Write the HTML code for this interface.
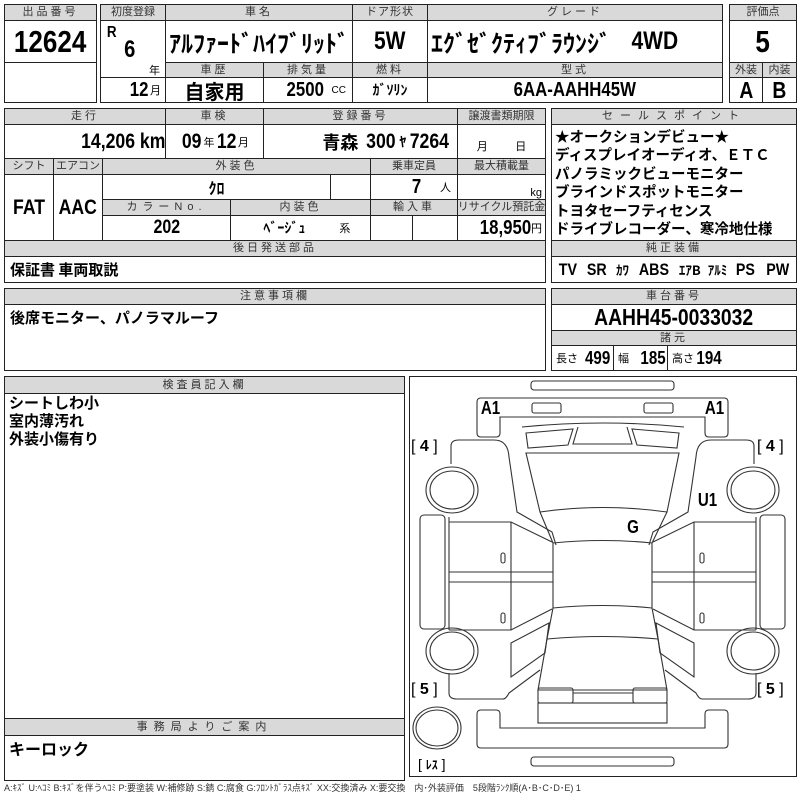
<!DOCTYPE html>
<html><head><meta charset="utf-8"><style>
*{margin:0;padding:0;box-sizing:border-box}
body{width:800px;height:800px;background:#fff;position:relative;overflow:hidden;font-family:"Liberation Sans","Noto Sans CJK JP",sans-serif;color:#000}
.c{position:absolute;border:1px solid #222;display:flex;align-items:center;justify-content:center;white-space:nowrap;overflow:hidden}
.h{background:#d9d9d9;font-size:11px;color:#333;letter-spacing:3px;line-height:1}
.b{font-weight:bold;font-family:"Liberation Sans","Noto Sans CJK JP",sans-serif;display:inline-block;transform:scaleX(.84)}
.j{font-weight:bold;font-family:"Noto Sans CJK JP",sans-serif}
.t{position:absolute;white-space:nowrap}
</style></head><body>

<!-- box 1 -->
<div class="c h" style="left:4px;top:4px;width:93px;height:17px">出品番号</div>
<div class="c" style="left:4px;top:20px;width:93px;height:43px"><span class="b" style="font-size:31px">12624</span></div>
<div class="c" style="left:4px;top:62px;width:93px;height:41px"></div>

<!-- box 2 -->
<div class="c h" style="left:100px;top:4px;width:66px;height:17px;letter-spacing:0">初度登録</div>
<div class="c h" style="left:165px;top:4px;width:188px;height:17px">車名</div>
<div class="c h" style="left:352px;top:4px;width:76px;height:17px;letter-spacing:1px">ドア形状</div>
<div class="c h" style="left:427px;top:4px;width:296px;height:17px">グレード</div>
<div class="c" style="left:100px;top:20px;width:66px;height:58px"></div>
<div class="t b" style="left:106px;top:24px;font-size:16px">R</div>
<div class="t b" style="left:123px;top:36px;font-size:24px">6</div>
<div class="t" style="left:149px;top:62px;font-size:11px">年</div>
<div class="c j" style="left:165px;top:20px;width:188px;height:43px;font-size:24px;justify-content:flex-start;padding-left:3px">ｱﾙﾌｧｰﾄﾞﾊｲﾌﾞﾘｯﾄﾞ</div>
<div class="c" style="left:352px;top:20px;width:76px;height:43px"><span class="b" style="font-size:25px">5W</span></div>
<div class="c j" style="left:427px;top:20px;width:296px;height:43px;font-size:24px;justify-content:flex-start;padding-left:3px">ｴｸﾞｾﾞｸﾃｨﾌﾞﾗｳﾝｼﾞ&nbsp;&nbsp;&nbsp;<span class="b" style="font-size:25px">4WD</span></div>
<div class="c h" style="left:165px;top:62px;width:99px;height:16px">車歴</div>
<div class="c h" style="left:263px;top:62px;width:90px;height:16px">排気量</div>
<div class="c h" style="left:352px;top:62px;width:76px;height:16px">燃料</div>
<div class="c h" style="left:427px;top:62px;width:296px;height:16px">型式</div>
<div class="c" style="left:100px;top:77px;width:66px;height:26px;justify-content:flex-end;padding-right:4px"><span class="b" style="font-size:20px">12</span><span style="font-size:11px">月</span></div>
<div class="c j" style="left:165px;top:77px;width:99px;height:26px;font-size:20px">自家用</div>
<div class="c" style="left:263px;top:77px;width:90px;height:26px;justify-content:flex-end;padding-right:6px"><span class="b" style="font-size:20px">2500</span>&nbsp;<span style="font-size:10px">CC</span></div>
<div class="c j" style="left:352px;top:77px;width:76px;height:26px;font-size:14px">ｶﾞｿﾘﾝ</div>
<div class="c" style="left:427px;top:77px;width:296px;height:26px"><span class="b" style="font-size:20px">6AA-AAHH45W</span></div>

<!-- box 3 -->
<div class="c h" style="left:729px;top:4px;width:68px;height:17px;letter-spacing:0">評価点</div>
<div class="c" style="left:729px;top:20px;width:68px;height:43px"><span class="b" style="font-size:31px">5</span></div>
<div class="c h" style="left:729px;top:62px;width:34px;height:16px;letter-spacing:0">外装</div>
<div class="c h" style="left:762px;top:62px;width:35px;height:16px;letter-spacing:0">内装</div>
<div class="c" style="left:729px;top:77px;width:34px;height:26px"><span class="b" style="font-size:23px">A</span></div>
<div class="c" style="left:762px;top:77px;width:35px;height:26px"><span class="b" style="font-size:23px">B</span></div>

<!-- section 2 -->
<div class="c h" style="left:4px;top:108px;width:162px;height:17px">走行</div>
<div class="c h" style="left:165px;top:108px;width:99px;height:17px">車検</div>
<div class="c h" style="left:263px;top:108px;width:195px;height:17px">登録番号</div>
<div class="c h" style="left:457px;top:108px;width:89px;height:17px;letter-spacing:0">譲渡書類期限</div>
<div class="c" style="left:4px;top:124px;width:162px;height:35px;justify-content:flex-end;padding-right:0"><span class="b" style="font-size:21px;transform-origin:right">14,206 km</span></div>
<div class="c" style="left:165px;top:124px;width:99px;height:35px"><span class="b" style="font-size:21px">09</span><span style="font-size:11px">年</span><span class="b" style="font-size:21px">12</span><span style="font-size:11px">月</span></div>
<div class="c" style="left:263px;top:124px;width:195px;height:35px;justify-content:flex-end;padding-right:4px"><span class="j" style="font-size:18px">青森</span><span class="b" style="font-size:21px">&nbsp;300</span><span class="j" style="font-size:14px">ﾔ</span><span class="b" style="font-size:21px">7264</span></div>
<div class="c" style="left:457px;top:124px;width:89px;height:35px;font-size:11px;align-items:flex-end;padding-bottom:4px">月&nbsp;&nbsp;&nbsp;&nbsp;&nbsp;&nbsp;&nbsp;&nbsp;&nbsp;日</div>
<div class="c h" style="left:4px;top:158px;width:50px;height:17px;letter-spacing:0">シフト</div>
<div class="c h" style="left:53px;top:158px;width:50px;height:17px;letter-spacing:0">エアコン</div>
<div class="c h" style="left:102px;top:158px;width:269px;height:17px">外装色</div>
<div class="c h" style="left:370px;top:158px;width:88px;height:17px;letter-spacing:0">乗車定員</div>
<div class="c h" style="left:457px;top:158px;width:89px;height:17px;letter-spacing:0">最大積載量</div>
<div class="c" style="left:4px;top:174px;width:50px;height:67px"><span class="b" style="font-size:21px">FAT</span></div>
<div class="c" style="left:53px;top:174px;width:50px;height:67px"><span class="b" style="font-size:21px">AAC</span></div>
<div class="c j" style="left:102px;top:174px;width:229px;height:26px;font-size:16px">ｸﾛ</div>
<div class="c" style="left:330px;top:174px;width:41px;height:26px"></div>
<div class="c" style="left:370px;top:174px;width:88px;height:26px;justify-content:flex-end;padding-right:6px"><span class="b" style="font-size:20px">7</span>&nbsp;&nbsp;&nbsp;&nbsp;<span style="font-size:11px">人</span></div>
<div class="c" style="left:457px;top:174px;width:89px;height:26px;font-size:11px;justify-content:flex-end;padding-right:3px;align-items:flex-end">kg</div>
<div class="c h" style="left:102px;top:199px;width:129px;height:17px;letter-spacing:5px">カラーNo.</div>
<div class="c h" style="left:230px;top:199px;width:141px;height:17px">内装色</div>
<div class="c h" style="left:370px;top:199px;width:88px;height:17px">輸入車</div>
<div class="c h" style="left:457px;top:199px;width:89px;height:17px;letter-spacing:0">リサイクル預託金</div>
<div class="c" style="left:102px;top:215px;width:129px;height:26px"><span class="b" style="font-size:19px">202</span></div>
<div class="c" style="left:230px;top:215px;width:141px;height:26px"><span class="j" style="font-size:14px">&nbsp;&nbsp;&nbsp;&nbsp;ﾍﾞｰｼﾞｭ</span><span style="font-size:11px;margin-left:34px">系</span></div>
<div class="c" style="left:370px;top:215px;width:43px;height:26px"></div>
<div class="c" style="left:412px;top:215px;width:46px;height:26px"></div>
<div class="c" style="left:457px;top:215px;width:89px;height:26px;justify-content:flex-end;padding-right:3px"><span class="b" style="font-size:20px;transform-origin:right">18,950</span><span style="font-size:11px">円</span></div>
<div class="c h" style="left:4px;top:240px;width:542px;height:17px">後日発送部品</div>
<div class="c j" style="left:4px;top:256px;width:542px;height:27px;font-size:15px;justify-content:flex-start;padding-left:5px">保証書 車両取説</div>

<!-- sales points -->
<div class="c h" style="left:551px;top:108px;width:246px;height:17px;letter-spacing:7px">セールスポイント</div>
<div class="c" style="left:551px;top:124px;width:246px;height:117px;display:block;padding:3px 0 0 3px;font-size:14.5px;line-height:18.4px;font-weight:bold;font-family:'Noto Sans CJK JP',sans-serif;white-space:pre">★オークションデビュー★
ディスプレイオーディオ、ＥＴＣ
パノラミックビューモニター
ブラインドスポットモニター
トヨタセーフティセンス
ドライブレコーダー、寒冷地仕様</div>
<div class="c h" style="left:551px;top:240px;width:246px;height:17px">純正装備</div>
<div class="c" style="left:551px;top:256px;width:246px;height:27px;justify-content:space-around;padding:0 1px"><span class="b" style="font-size:17px">TV</span><span class="b" style="font-size:17px">SR</span><span class="j" style="font-size:13px">ｶﾜ</span><span class="b" style="font-size:17px">ABS</span><span class="j" style="font-size:13px">ｴｱB</span><span class="j" style="font-size:13px">ｱﾙﾐ</span><span class="b" style="font-size:17px">PS</span><span class="b" style="font-size:17px">PW</span></div>

<!-- section 3 -->
<div class="c h" style="left:4px;top:288px;width:542px;height:17px">注意事項欄</div>
<div class="c" style="left:4px;top:304px;width:542px;height:67px;display:block;padding:2px 5px"><span class="j" style="font-size:15px">後席モニター、パノラマルーフ</span></div>
<div class="c h" style="left:551px;top:288px;width:246px;height:17px">車台番号</div>
<div class="c" style="left:551px;top:304px;width:246px;height:27px"><span class="b" style="font-size:23px">AAHH45-0033032</span></div>
<div class="c h" style="left:551px;top:330px;width:246px;height:16px">諸元</div>
<div class="c" style="left:551px;top:345px;width:63px;height:26px;justify-content:flex-start;padding-left:4px"><span style="font-size:11px">長さ</span><span class="b" style="font-size:18px">&nbsp;499</span></div>
<div class="c" style="left:613px;top:345px;width:55px;height:26px;justify-content:flex-start;padding-left:4px"><span style="font-size:11px">幅</span>&nbsp;&nbsp;<span class="b" style="font-size:18px">185</span></div>
<div class="c" style="left:667px;top:345px;width:130px;height:26px;justify-content:flex-start;padding-left:4px"><span style="font-size:11px">高さ</span><span class="b" style="font-size:18px">194</span></div>

<!-- section 4 -->
<div class="c" style="left:4px;top:376px;width:401px;height:405px"></div>
<div class="c h" style="left:4px;top:376px;width:401px;height:18px">検査員記入欄</div>
<div class="t j" style="left:9px;top:394px;font-size:15px;line-height:18px">シートしわ小<br>室内薄汚れ<br>外装小傷有り</div>
<div class="c h" style="left:4px;top:718px;width:401px;height:18px;letter-spacing:6px">事務局よりご案内</div>
<div class="t j" style="left:9px;top:736px;font-size:16px">キーロック</div>

<div class="c" style="left:409px;top:376px;width:388px;height:401px"></div>
<svg style="position:absolute;left:0;top:0" width="800" height="800" viewBox="0 0 800 800" fill="none" stroke="#333" stroke-width="1.1">
<rect x="531" y="381" width="143" height="9" rx="3"/>
<path d="M477,402 q0,-4 4,-4 L724,398 q4,0 4,4 L728,433 q0,4 -4,4 L709,437 q-4,0 -4,-4 L705,417 L500,417 L500,433 q0,4 -4,4 L481,437 q-4,0 -4,-4 Z"/>
<rect x="532" y="403" width="29" height="10" rx="2"/>
<rect x="644" y="403" width="29" height="10" rx="2"/>
<path d="M522,427 Q603,419 684,427"/>
<path d="M526,433 L573,429 L568,445 L528,448 Z"/>
<path d="M679,433 L632,429 L637,445 L677,448 Z"/>
<path d="M578,427 L573,444 L632,444 L627,427"/>
<path d="M526,453 L679,453 L667,512 Q603,503 540,512 Z"/>
<path d="M540,512 L553,543 Q603,538 652,543 L667,512"/>
<path d="M553,543 L553,608 Q603,603 652,608 L652,543"/>
<path d="M553,608 L547,639 Q603,634 658,639 L652,608"/>
<path d="M547,639 L538,690 L667,690 L658,639"/>
<rect x="538" y="688" width="35" height="15" rx="2"/>
<rect x="633" y="688" width="34" height="15" rx="2"/>
<path d="M573,693 L633,693"/>
<rect x="538" y="703" width="129" height="20"/>
<path d="M477,744 q0,4 4,4 L724,748 q4,0 4,-4 L728,714 q0,-4 -4,-4 L709,710 q-4,0 -4,4 L705,728 L500,728 L500,714 q0,-4 -4,-4 L481,710 q-4,0 -4,4 Z"/>
<rect x="531" y="757" width="143" height="9" rx="3"/>
<g id="L">
<path d="M451,464 L451,446 q0,-6 8,-6 L494,440 q14,0 15,17 L517,512 L552,532 L556,545"/>
<path d="M449,517 L449,630"/>
<path d="M449,522 L511,522 L552,542"/>
<path d="M449,572 L553,572 M449,582 L553,582"/>
<path d="M511,522 L511,630 M449,630 L511,630 L552,609"/>
<rect x="420" y="515" width="25" height="114" rx="4"/>
<ellipse cx="452" cy="490" rx="26" ry="23"/><ellipse cx="452" cy="490" rx="22" ry="19"/>
<ellipse cx="452" cy="651" rx="26" ry="23"/><ellipse cx="452" cy="651" rx="22" ry="19"/>
<path d="M511,643 L549,623 L545,653 L511,677 Z"/>
<path d="M449,673 L449,693 q0,6 8,6 L503,699 q3,0 6,-6 L540,670"/>
<rect x="501" y="553" width="4" height="10" rx="2"/>
<rect x="501" y="613" width="4" height="10" rx="2"/>
</g>
<use href="#L" transform="matrix(-1,0,0,1,1205,0)"/>
<ellipse cx="437" cy="728" rx="24" ry="21"/><ellipse cx="437" cy="728" rx="21" ry="18"/>
</svg>
<div class="t b" style="left:479px;top:398px;font-size:18px">A1</div>
<div class="t b" style="left:703px;top:398px;font-size:18px">A1</div>
<div class="t" style="left:411px;top:438px;font-size:16px">[ <b>4</b> ]</div>
<div class="t" style="left:757px;top:438px;font-size:16px">[ <b>4</b> ]</div>
<div class="t b" style="left:696px;top:490px;font-size:18px">U1</div>
<div class="t b" style="left:626px;top:517px;font-size:18px">G</div>
<div class="t" style="left:411px;top:681px;font-size:16px">[ <b>5</b> ]</div>
<div class="t" style="left:757px;top:681px;font-size:16px">[ <b>5</b> ]</div>
<div class="t" style="left:418px;top:756px;font-size:14px">[ <b class="j" style="font-size:12px">ﾚｽ</b> ]</div>

<div class="t" style="left:4px;top:781px;font-size:9px;color:#333;letter-spacing:0">A:ｷｽﾞ U:ﾍｺﾐ B:ｷｽﾞを伴うﾍｺﾐ P:要塗装 W:補修跡 S:錆 C:腐食 G:ﾌﾛﾝﾄｶﾞﾗｽ点ｷｽﾞ XX:交換済み X:要交換　内･外装評価　5段階ﾗﾝｸ順(A･B･C･D･E) 1</div>
</body></html>
